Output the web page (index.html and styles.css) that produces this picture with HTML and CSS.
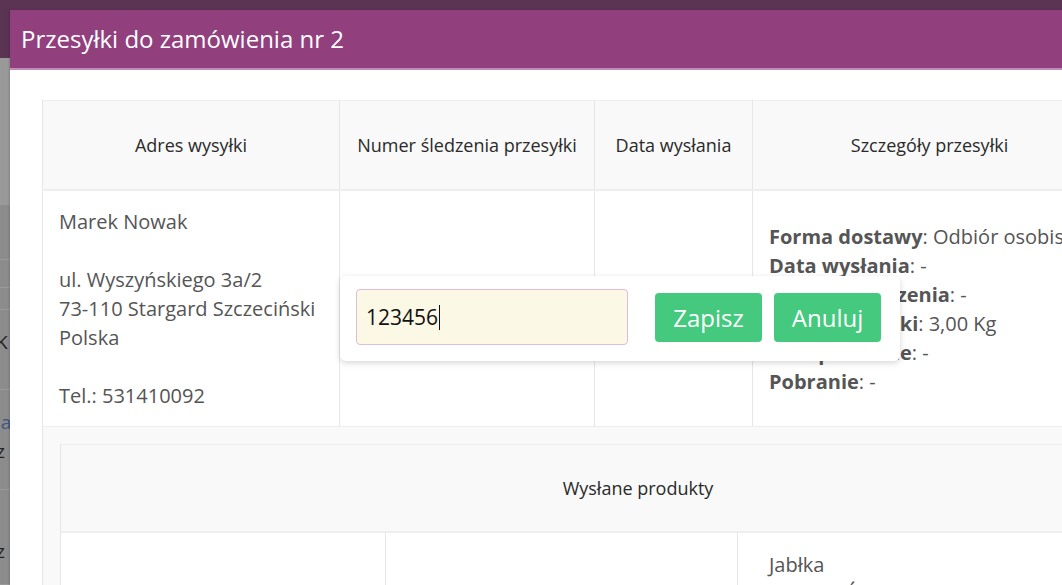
FILE: index.html
```html
<!DOCTYPE html>
<html lang="pl">
<head>
    <meta charset="UTF-8">
    <title>Przesyłki do zamówienia nr 2</title>
    <link rel="stylesheet" href="styles.css">
</head>
<body>
    <div class="page">
        <div class="page-top"></div>
        <div class="page-row light" style="height: 147px"></div>
        <div class="page-row" style="height: 55px"></div>
        <div class="page-row" style="height: 28px"></div>
        <div class="page-row" style="height: 22px"></div>
        <div class="page-row" style="height: 80px"><span class="frag">K</span></div>
        <div class="page-row" style="height: 100px"><span class="frag blue">la</span><span class="frag">z</span></div>
        <div class="page-row" style="height: 95px"><span class="frag blue">J</span><span class="frag">z</span></div>
    </div>

    <div class="modal">
        <div class="modal-header">
            <h3>Przesyłki do zamówienia nr 2</h3>
        </div>
        <div class="modal-body">
            <table class="shipments">
                <colgroup>
                    <col style="width: 297px">
                    <col style="width: 255px">
                    <col style="width: 158px">
                    <col style="width: 354px">
                    <col style="width: 200px">
                </colgroup>
                <thead>
                    <tr>
                        <th>Adres wysyłki</th>
                        <th>Numer śledzenia przesyłki</th>
                        <th>Data wysłania</th>
                        <th>Szczegóły przesyłki</th>
                        <th>Akcje</th>
                    </tr>
                </thead>
                <tbody>
                    <tr>
                        <td>
                            Marek Nowak<br><br>
                            ul. Wyszyńskiego 3a/2<br>
                            73-110 Stargard Szczeciński<br>
                            Polska<br><br>
                            Tel.: 531410092
                        </td>
                        <td class="tracking">
                            <div class="popover">
                                <div class="input">123456<span class="caret"></span></div>
                                <button class="btn">Zapisz</button>
                                <button class="btn">Anuluj</button>
                            </div>
                        </td>
                        <td></td>
                        <td class="details">
                            <b>Forma dostawy</b>: Odbiór osobisty<br>
                            <b>Data wysłania</b>: -<br>
                            <b>Data dostarczenia</b>: -<br>
                            <b>Waga przesyłki</b>: 3,00 Kg<br>
                            <b>Ubezpieczenie</b>: -<br>
                            <b>Pobranie</b>: -
                        </td>
                        <td></td>
                    </tr>
                    <tr class="products-row">
                        <td colspan="5">
                            <table class="products">
                                <colgroup>
                                    <col style="width: 325px">
                                    <col style="width: 352px">
                                    <col>
                                </colgroup>
                                <thead>
                                    <tr>
                                        <th colspan="3">Wysłane produkty</th>
                                    </tr>
                                </thead>
                                <tbody>
                                    <tr>
                                        <td></td>
                                        <td></td>
                                        <td class="product">
                                            Jabłka<br>
                                            <b>Indeks</b>: ŚW-001
                                        </td>
                                    </tr>
                                </tbody>
                            </table>
                        </td>
                    </tr>
                </tbody>
            </table>
        </div>
    </div>
</body>
</html>
```

FILE: styles.css
```css
html, body {
    margin: 0;
    height: 100%;
    overflow: hidden;
}

body {
    font-family: "Open Sans", "Noto Sans", sans-serif;
    background-color: #8c8c8c;
}

/* page behind the dialog, already dimmed */
.page-top {
    height: 58px;
    background-color: #5b3353;
}

.page-row {
    box-sizing: border-box;
    border-bottom: 1px solid #9a9a9a;
    padding-top: 18px;
    font-size: 19px;
    color: #222;
}

.page-row.light {
    background-color: #999;
}

.frag {
    display: block;
    margin-left: -4px;
    line-height: 29px;
}

.frag.blue {
    color: #3f5686;
}

.modal {
    position: absolute;
    left: 10px;
    top: 10px;
    width: 1320px;
    height: 700px;
    background-color: #fff;
    box-shadow: -1px 0 2px rgba(0, 0, 0, 0.15);
}

.modal-header {
    height: 58px;
    background-color: #923f7e;
    border-bottom: 2px solid #c58bb8;
}

.modal-header h3 {
    margin: 0;
    padding-left: 11px;
    font-size: 24px;
    font-weight: normal;
    line-height: 58px;
    color: #fff;
}

.modal-body {
    padding: 30px 32px;
}

table {
    border-collapse: collapse;
    table-layout: fixed;
}

.shipments {
    width: 1264px;
    border: 1px solid #eee;
}

th {
    padding: 33px 10px;
    line-height: 22px;
    font-size: 18px;
    font-weight: normal;
    color: #2a2a2a;
    background-color: #f9f9f9;
    border-left: 1px solid #e6e6e6;
    border-bottom: 2px solid #eee;
    text-align: center;
    white-space: nowrap;
}

td {
    padding: 16px;
    font-size: 20px;
    line-height: 29px;
    color: #555;
    vertical-align: middle;
    border-left: 1px solid #e6e6e6;
    border-top: 1px solid #eee;
}

td b {
    font-weight: bold;
}

.details {
    white-space: nowrap;
    overflow: hidden;
}

.tracking {
    position: relative;
}

.popover {
    position: absolute;
    left: 0;
    top: 85px;
    display: flex;
    align-items: center;
    padding: 13px 19px 16px 16px;
    background-color: #fff;
    border-radius: 6px;
    box-shadow: 0 2px 6px rgba(0, 0, 0, 0.16);
    z-index: 2;
}

.input {
    box-sizing: border-box;
    width: 272px;
    height: 56px;
    padding: 0 9px;
    margin-right: 27px;
    display: flex;
    align-items: center;
    font-size: 21px;
    color: #111;
    background-color: #fcf8e6;
    border: 1px solid #dfbdd6;
    border-radius: 4px;
}

.caret {
    display: inline-block;
    width: 1px;
    height: 25px;
    margin-left: 1px;
    background-color: #111;
}

.btn {
    box-sizing: border-box;
    width: 107px;
    height: 49px;
    margin-right: 12px;
    padding: 0;
    font-family: inherit;
    font-size: 24px;
    color: #fff;
    background-color: #44c97e;
    border: none;
    border-radius: 4px;
}

.btn:last-child {
    margin-right: 0;
}

.products-row > td {
    padding: 17px;
    background-color: #f9f9f9;
}

.products {
    width: 1156px;
    border: 1px solid #eee;
}

.products th {
    padding: 32px 16px;
    border-bottom: 2px solid #eee;
}

.products td {
    background-color: #fff;
    padding: 17px 31px;
    vertical-align: top;
    height: 120px;
}
```
